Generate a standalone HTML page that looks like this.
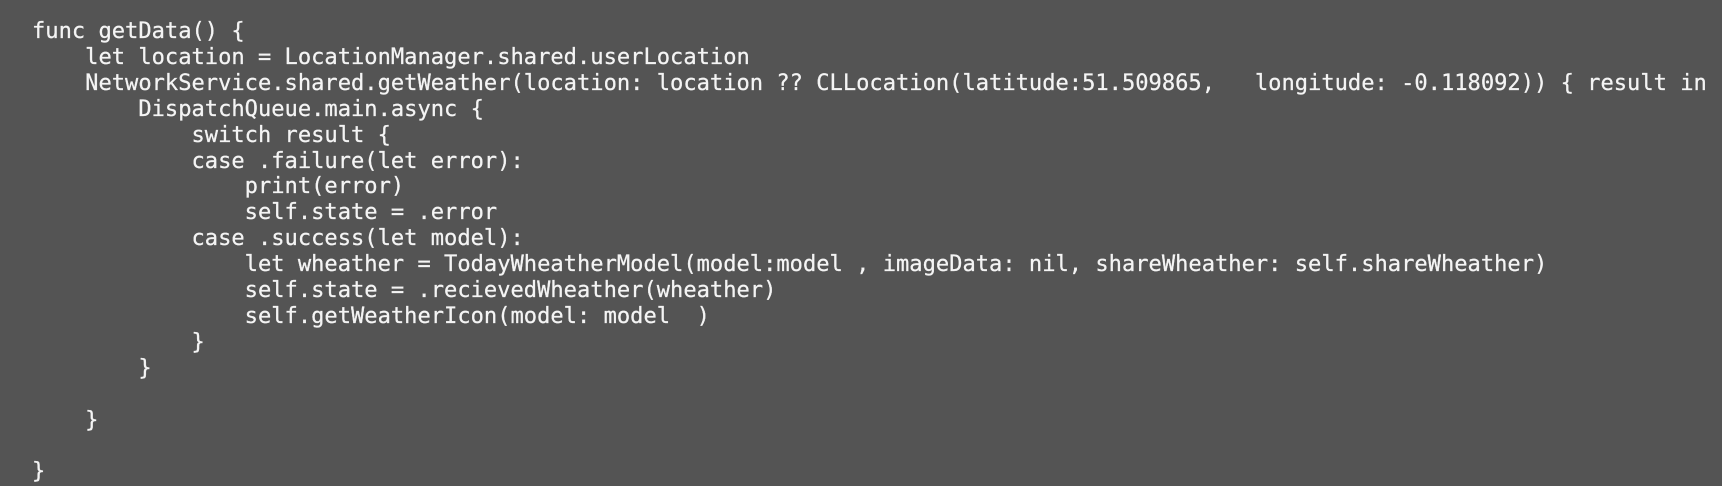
<!DOCTYPE html>
<html><head><meta charset="utf-8"><style>
html,body{margin:0;padding:0;background:#545454;width:1722px;height:486px;overflow:hidden}
pre{margin:0;position:absolute;left:32px;top:19px;font-family:"DejaVu Sans Mono","Liberation Mono",monospace;font-size:22.08px;line-height:25.9px;color:#f4f4f4;white-space:pre;-webkit-text-stroke:0.25px #f4f4f4}
</style></head><body><pre>func getData() {
    let location = LocationManager.shared.userLocation
    NetworkService.shared.getWeather(location: location ?? CLLocation(latitude:51.509865,   longitude: -0.118092)) { result in
        DispatchQueue.main.async {
            switch result {
            case .failure(let error):
                print(error)
                self.state = .error
            case .success(let model):
                let wheather = TodayWheatherModel(model:model , imageData: nil, shareWheather: self.shareWheather)
                self.state = .recievedWheather(wheather)
                self.getWeatherIcon(model: model  )
            }
        }

    }

}</pre></body></html>
